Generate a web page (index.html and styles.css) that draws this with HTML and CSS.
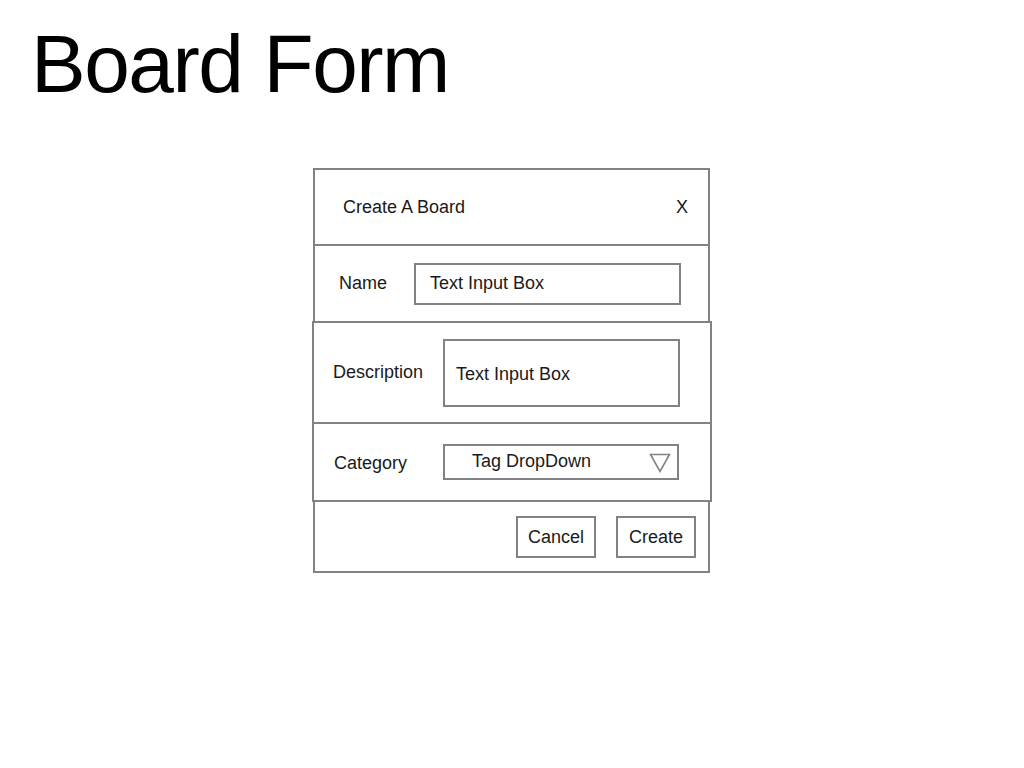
FILE: index.html
```html
<!DOCTYPE html>
<html lang="en">
<head>
    <meta charset="UTF-8">
    <meta name="viewport" content="width=device-width, initial-scale=1.0">
    <title>Board Form</title>
    <link rel="stylesheet" href="styles.css">
</head>
<body>
    <h1 class="page-title">Board Form</h1>

    <div class="dialog">
        <div class="section header">
            <span class="dialog-title">Create A Board</span>
            <span class="close">X</span>
        </div>

        <div class="section row name-row">
            <label class="field-label">Name</label>
            <div class="input-box">Text Input Box</div>
        </div>

        <div class="section row wide desc-row">
            <label class="field-label">Description</label>
            <div class="input-box">Text Input Box</div>
        </div>

        <div class="section row wide cat-row">
            <label class="field-label">Category</label>
            <div class="input-box dropdown">
                <span>Tag DropDown</span>
                <svg class="caret" width="22" height="20" viewBox="0 0 22 20">
                    <polygon points="1.5,1.5 20.5,1.5 11,18.5" fill="none" stroke="#808285" stroke-width="1.6" stroke-linejoin="miter"/>
                </svg>
            </div>
        </div>

        <div class="section footer">
            <button class="btn">Cancel</button>
            <button class="btn">Create</button>
        </div>
    </div>
</body>
</html>
```

FILE: styles.css
```css
* {
    box-sizing: border-box;
}

body {
    margin: 0;
    font-family: "Liberation Sans", Arial, sans-serif;
    color: #1a1a1a;
    background-color: #fff;
}

.page-title {
    margin: 0;
    padding: 23px 0 0 31px;
    font-size: 82px;
    line-height: 82px;
    font-weight: normal;
    letter-spacing: -1.5px;
    color: #000;
}

.dialog {
    width: 397px;
    margin: 63px 0 0 313px;
    display: flex;
    flex-direction: column;
}

.section {
    border: 2px solid #808285;
    margin-top: -2px;
    display: flex;
    align-items: center;
    font-size: 18px;
}

.section:first-child {
    margin-top: 0;
}

.section.wide {
    width: 400px;
    margin-left: -1px;
}

.header {
    height: 78px;
    padding: 0 20px 0 28px;
    justify-content: space-between;
}

.row {
    height: 79px;
}

.field-label {
    flex-shrink: 0;
}

.input-box {
    border: 2px solid #808285;
    display: flex;
    align-items: center;
    padding-left: 14px;
}

.name-row {
    padding-left: 24px;
}

.name-row .field-label {
    width: 75px;
}

.name-row .input-box {
    width: 267px;
    height: 42px;
}

.desc-row {
    height: 103px;
    padding-left: 19px;
}

.desc-row .field-label {
    width: 110px;
}

.desc-row .input-box {
    width: 237px;
    height: 68px;
    padding: 3px 0 0 11px;
}

.cat-row {
    height: 80px;
    padding-left: 20px;
}

.cat-row .field-label {
    width: 109px;
    padding-top: 3px;
}

.dropdown {
    width: 236px;
    height: 36px;
    padding: 0 6px 0 27px;
    justify-content: space-between;
}

.dropdown span {
    margin-top: -2px;
}

.caret {
    display: block;
    margin-top: 1px;
}

.footer {
    height: 73px;
    justify-content: flex-end;
    gap: 20px;
    padding-right: 12px;
}

.btn {
    width: 80px;
    height: 42px;
    border: 2px solid #808285;
    background: #fff;
    font-family: "Liberation Sans", Arial, sans-serif;
    font-size: 18px;
    color: #1a1a1a;
    padding: 2px 0 0;
}
```
